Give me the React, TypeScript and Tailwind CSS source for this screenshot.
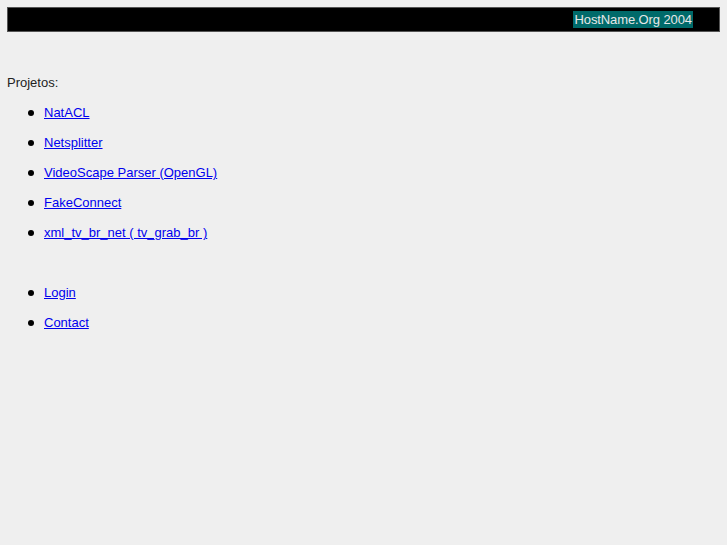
import React from "react";

const projects = [
  "NatACL",
  "Netsplitter",
  "VideoScape Parser (OpenGL)",
  "FakeConnect",
  "xml_tv_br_net ( tv_grab_br )",
];

function Item({ label }: { label: string }) {
  return (
    <li className="flex h-[30px] items-center">
      <span className="ml-[21px] mr-[10px] inline-block h-[6px] w-[6px] rounded-full bg-black" />
      <a href="#" className="text-[13px] text-[#0000ee] underline">
        {label}
      </a>
    </li>
  );
}

export default function App() {
  return (
    <div
      className="min-h-[545px] w-full bg-[#efefef] px-[7px] pt-[7px] text-[#222]"
      style={{ fontFamily: '"Liberation Sans", Arial, sans-serif' }}
    >
      <div className="flex h-[25px] items-center justify-end border border-[#555] bg-black pr-[26px]">
        <span className="flex h-[17px] items-center bg-[#006a6a] px-[1px] text-[13px] tracking-[-0.1px] text-[#e8e8e8]">
          HostName.Org 2004
        </span>
      </div>
      <div className="mt-[36px] flex h-[30px] items-center text-[13px]">Projetos:</div>
      <ul>
        {projects.map((p) => (
          <Item key={p} label={p} />
        ))}
        <li className="h-[30px]" />
        <Item label="Login" />
        <Item label="Contact" />
      </ul>
    </div>
  );
}
